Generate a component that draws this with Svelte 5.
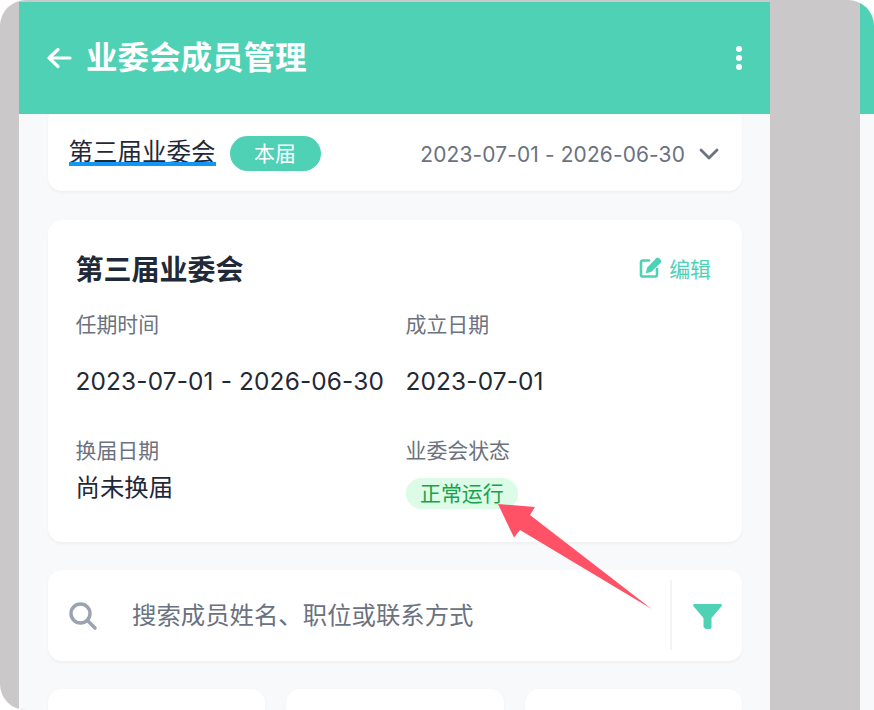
<script>
	const members = [0, 1, 2];
</script>

<div class="stage">
	<div class="screen">
		<header class="topbar">
			<div class="title-wrap">
				<svg class="back" width="26" height="24" viewBox="0 0 26 24" fill="none">
					<path d="M24 12H3M12 3.5 3 12l9 8.5" stroke="#fff" stroke-width="3.2" stroke-linecap="round" stroke-linejoin="round" />
				</svg>
				<h1>业委会成员管理</h1>
			</div>
			<div class="dots"><i></i><i></i><i></i></div>
		</header>

		<div class="scroller">
			<div class="content">
				<section class="card term-bar">
					<div class="term-left">
						<span class="term-name">第三届业委会</span>
						<span class="current">本届</span>
					</div>
					<div class="term-right">
						<span>2023-07-01 - 2026-06-30</span>
						<svg width="20" height="12" viewBox="0 0 20 12" fill="none">
							<path d="M2 2l8 8 8-8" stroke="#6b7280" stroke-width="2.8" stroke-linecap="round" stroke-linejoin="round" />
						</svg>
					</div>
				</section>

				<section class="card detail">
					<div class="detail-head">
						<h2>第三届业委会</h2>
						<div class="edit">
							<svg width="23" height="21" viewBox="0 0 23 21" fill="none">
								<path d="M10 3.5H3.8A1.8 1.8 0 0 0 2 5.3v12.4a1.8 1.8 0 0 0 1.8 1.8h12.4a1.8 1.8 0 0 0 1.8-1.8V12" stroke="#4fd1b5" stroke-width="2.6" stroke-linecap="round" />
								<path d="M17.4 1a1.8 1.8 0 0 1 2.5 0l2 2a1.8 1.8 0 0 1 0 2.5L12.2 15l-5.4 1.2L8 10.8z" fill="#4fd1b5" />
							</svg>
							<span>编辑</span>
						</div>
					</div>
					<div class="info-grid">
						<div class="info">
							<div class="label">任期时间</div>
							<div class="value spaced">2023-07-01 - 2026-06-30</div>
						</div>
						<div class="info">
							<div class="label">成立日期</div>
							<div class="value spaced">2023-07-01</div>
						</div>
						<div class="info lower">
							<div class="label">换届日期</div>
							<div class="value">尚未换届</div>
						</div>
						<div class="info lower">
							<div class="label">业委会状态</div>
							<span class="status">正常运行</span>
						</div>
					</div>
				</section>

				<section class="card search">
					<svg class="search-icon" width="30" height="30" viewBox="0 0 30 30" fill="none">
						<circle cx="12.5" cy="12.5" r="9.5" stroke="#9ca3af" stroke-width="3.4" />
						<path d="M19.5 19.5 27 27" stroke="#9ca3af" stroke-width="3.6" stroke-linecap="round" />
					</svg>
					<span class="placeholder">搜索成员姓名、职位或联系方式</span>
					<div class="filter">
						<svg width="29" height="25" viewBox="0 0 29 25" fill="none">
							<path d="M1.5 0h26c1.2 0 1.8 1.3 1 2.2L18.5 14v9.3c0 1-.8 1.7-1.7 1.7h-3.3c-1 0-1.6-.6-2.2-1.3l-.8-.9V14L.5 2.2C-.3 1.3.3 0 1.5 0z" fill="#4fd1b5" />
						</svg>
					</div>
				</section>

				<div class="member-grid">
					{#each members as m (m)}
						<div class="card member"></div>
					{/each}
				</div>
			</div>
		</div>
	</div>

	<div class="next-screen">
		<div class="next-top"></div>
	</div>

	<svg class="arrow" width="154" height="106" viewBox="0 0 154 106">
		<path d="M0 0 37 3 32 11 153.7 105 22 26 16 33.6z" fill="#ff5266" />
	</svg>
</div>

<style>
	:global(body) {
		margin: 0;
		background: #fff;
	}

	.stage {
		position: relative;
		width: 874px;
		height: 710px;
		display: flex;
		gap: 90px;
		box-sizing: border-box;
		padding: 2px 0 0 19px;
		overflow: hidden;
		background: #cac8c9;
		border-radius: 26px 26px 0 26px;
		font-family: Inter, "Noto Sans CJK SC", sans-serif;
	}

	.screen {
		width: 751px;
		flex: none;
		background: #f8f9fb;
		display: flex;
		flex-direction: column;
	}

	.topbar {
		height: 112px;
		flex: none;
		box-sizing: border-box;
		padding: 0 25px 0 27px;
		background: #4fd1b5;
		display: flex;
		align-items: center;
		justify-content: space-between;
	}

	.title-wrap {
		display: flex;
		align-items: center;
		gap: 14px;
	}

	.back {
		display: block;
	}

	h1 {
		margin: 0;
		font-size: 31.5px;
		line-height: 44px;
		font-weight: 700;
		color: #fff;
	}

	.dots {
		display: flex;
		flex-direction: column;
		gap: 3px;
		padding-right: 3px;
	}

	.dots i {
		display: block;
		width: 6px;
		height: 6px;
		border-radius: 50%;
		background: #fff;
	}

	.scroller {
		flex: 1;
		min-height: 0;
		overflow: hidden;
	}

	.content {
		margin-top: -8px;
		padding: 0 28px 0 29px;
		display: flex;
		flex-direction: column;
		gap: 28px;
	}

	.card {
		background: #fff;
		border-radius: 14px;
		box-shadow: 0 1.5px 3px rgba(0, 0, 0, 0.04);
	}

	.term-bar {
		height: 85px;
		flex: none;
		margin-bottom: 1px;
		box-sizing: border-box;
		padding: 10px 23px 0 20.5px;
		display: flex;
		align-items: center;
		justify-content: space-between;
	}

	.term-left {
		display: flex;
		align-items: center;
		gap: 14px;
	}

	.term-name {
		position: relative;
		font-size: 24.5px;
		line-height: 28px;
		margin-bottom: 4px;
		color: #1f2937;
	}

	.term-name::after {
		content: "";
		position: absolute;
		left: 0;
		right: 0;
		bottom: 0;
		height: 4px;
		background: #1296f5;
	}

	.current {
		width: 91px;
		height: 35px;
		border-radius: 18px;
		background: #4fd1b5;
		color: #fff;
		font-size: 20.9px;
		line-height: 35px;
		text-align: center;
	}

	.term-right {
		display: flex;
		align-items: center;
		gap: 14px;
		font-size: 20.9px;
		letter-spacing: 0.15px;
		color: #6b7280;
		margin-bottom: -1px;
	}

	.detail {
		height: 322px;
		flex: none;
		box-sizing: border-box;
		padding: 29px 28px 28px 27.5px;
	}

	.detail-head {
		display: flex;
		align-items: center;
		justify-content: space-between;
		height: 42px;
		margin-bottom: 19px;
	}

	h2 {
		margin: 0;
		font-size: 28px;
		line-height: 42px;
		font-weight: 700;
		color: #1f2937;
	}

	.edit {
		display: flex;
		align-items: center;
		gap: 7px;
		font-size: 20.9px;
		color: #4fd1b5;
		padding-right: 3px;
		margin-bottom: 5px;
	}

	.info-grid {
		display: grid;
		grid-template-columns: 330px 1fr;
	}

	.info {
		height: 108px;
		white-space: nowrap;
	}

	.info.lower {
		height: 90px;
		margin-top: 18px;
	}

	.label {
		font-size: 20.9px;
		line-height: 30px;
		color: #6b7280;
	}

	.value {
		font-size: 24.4px;
		line-height: 36px;
		color: #1f2937;
		margin-top: 3px;
	}

	.value.spaced {
		margin-top: 23px;
		letter-spacing: 0.15px;
	}

	.status {
		display: inline-block;
		margin-top: 12px;
		padding: 0 14.5px;
		height: 31px;
		line-height: 31px;
		border-radius: 16px;
		background: #dcfce7;
		color: #16a34a;
		font-size: 20.9px;
	}

	.search {
		height: 91px;
		flex: none;
		display: flex;
		align-items: center;
		padding-left: 20px;
		position: relative;
	}

	.search-icon {
		flex: none;
	}

	.placeholder {
		margin-left: 34px;
		margin-bottom: 2px;
		font-size: 24.4px;
		line-height: 30px;
		color: #6b7280;
	}

	.filter {
		position: absolute;
		right: 0;
		top: 10px;
		bottom: 11px;
		width: 72px;
		box-sizing: border-box;
		border-left: 2px solid #f3f4f6;
		display: flex;
		align-items: center;
		justify-content: center;
		padding-top: 2px;
	}

	.member-grid {
		display: grid;
		grid-template-columns: repeat(3, 1fr);
		gap: 21px;
	}

	.member {
		height: 120px;
	}

	.next-screen {
		flex: 1;
		background: #f8f9fb;
	}

	.next-top {
		height: 112px;
		background: #4fd1b5;
	}

	.arrow {
		position: absolute;
		left: 498px;
		top: 504px;
		overflow: visible;
	}
</style>
